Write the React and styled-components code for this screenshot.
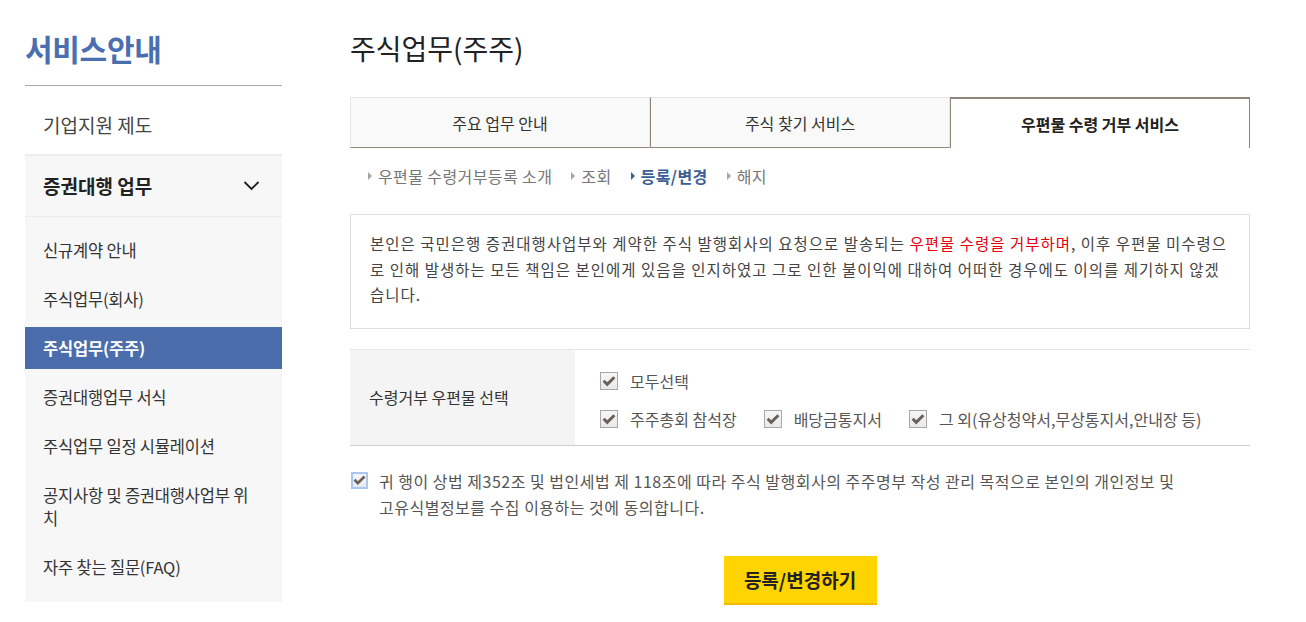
import React from 'react';
import styled, { createGlobalStyle } from 'styled-components';

const GlobalStyle = createGlobalStyle`
  * { box-sizing: border-box; }
  body {
    margin: 0;
    background: #fff;
    font-family: "Noto Sans CJK KR", "Noto Sans", sans-serif;
    color: #333;
  }
`;

const Page = styled.div`
  display: flex;
  gap: 68px;
  padding-left: 25px;
  width: 1306px;
`;

const Sidebar = styled.aside`
  width: 257px;
  flex-shrink: 0;
`;

const SideTitle = styled.h2`
  margin: 0;
  height: 86px;
  padding-top: 29px;
  font-size: 30px;
  line-height: 38px;
  font-weight: 700;
  color: #4a6fae;
  letter-spacing: -0.3px;
  border-bottom: 1px solid #aaa;
`;

const TopItem = styled.div`
  height: 68px;
  padding: 27px 18px 0;
  font-size: 19px;
  line-height: 24px;
  color: #444;
`;

const Group = styled.div`
  background: #f7f7f7;
  border-top: 2px solid #ededed;
`;

const GroupHead = styled.div`
  display: flex;
  align-items: center;
  justify-content: space-between;
  height: 61px;
  padding: 0 22px 2px 18px;
  font-size: 19px;
  font-weight: 700;
  color: #222;
  border-bottom: 1px solid #ececec;
`;

const SubList = styled.ul`
  list-style: none;
  margin: 0;
  padding: 12px 0 14px;
  display: flex;
  flex-direction: column;
  gap: 7px;
`;

const SubItem = styled.li`
  padding: 9.5px 25px 9.5px 18px;
  min-height: 42px;
  font-size: 16.5px;
  line-height: 23px;
  letter-spacing: -0.2px;
  color: ${p => (p.$active ? '#fff' : '#333')};
  background: ${p => (p.$active ? '#4b6dab' : 'transparent')};
  font-weight: ${p => (p.$active ? 700 : 400)};
`;

const Main = styled.main`
  width: 900px;
  flex-shrink: 0;
  padding-top: 30px;
`;

const PageTitle = styled.h1`
  margin: 0 0 31px;
  font-size: 28px;
  line-height: 36px;
  font-weight: 400;
  color: #222;
`;

const Tabs = styled.div`
  display: flex;
  height: 51px;
`;

const Tab = styled.div`
  flex: 1;
  display: flex;
  align-items: center;
  justify-content: center;
  padding-top: ${p => (p.$active ? '1px' : '0')};
  font-size: 16px;
  color: ${p => (p.$active ? '#222' : '#333')};
  font-weight: ${p => (p.$active ? 700 : 400)};
  background: ${p => (p.$active ? '#fff' : '#f9f9f9')};
  border: 1px solid ${p => (p.$active ? '#8e857b' : '#e6e6e6')};
  border-top-width: ${p => (p.$active ? '2px' : '1px')};
  border-bottom: ${p => (p.$active ? 'none' : '1px solid #8e857b')};
  & + & { border-left: ${p => (p.$active ? '1px solid #8e857b' : 'none')}; }
`;

const Crumbs = styled.nav`
  display: flex;
  gap: 19px;
  margin-top: 16px;
  padding-left: 18px;
  line-height: 24px;
`;

const Crumb = styled.span`
  display: flex;
  align-items: center;
  gap: 6px;
  font-size: 16px;
  letter-spacing: 0.4px;
  color: ${p => (p.$active ? '#3d5f96' : '#777')};
  font-weight: ${p => (p.$active ? 700 : 400)};
  &::before {
    content: '';
    border-left: 4px solid ${p => (p.$active ? '#3d5f96' : '#a5a5a5')};
    border-top: 4px solid transparent;
    border-bottom: 4px solid transparent;
  }
`;

const Notice = styled.div`
  margin-top: 26px;
  border: 1px solid #ddd;
  padding: 16px 21px 20px 19px;
  font-size: 15.5px;
  line-height: 25.5px;
  letter-spacing: 1px;
  color: #444;
`;

const Red = styled.span`
  color: #e60012;
`;

const Table = styled.div`
  display: flex;
  margin-top: 20px;
  border-top: 1px solid #e6e6e6;
  border-bottom: 1px solid #cfcfcf;
`;

const HeadCell = styled.div`
  width: 225px;
  display: flex;
  align-items: center;
  padding-left: 19px;
  background: #f4f4f4;
  font-size: 16px;
  color: #333;
`;

const BodyCell = styled.div`
  flex: 1;
  padding: 19px 0 14px 25px;
  display: flex;
  flex-direction: column;
  gap: 14px;
`;

const CheckRow = styled.div`
  display: flex;
  gap: 27px;
  height: 24px;
`;

const CheckLabel = styled.label`
  display: flex;
  align-items: center;
  gap: 12px;
  font-size: 16px;
  color: #555;
`;

const Box = styled.span`
  width: ${p => (p.$focus ? '17px' : '18px')};
  height: ${p => (p.$focus ? '17px' : '18px')};
  flex-shrink: 0;
  display: flex;
  align-items: center;
  justify-content: center;
  background: linear-gradient(#f6f6f6, #e9e9e9);
  border: ${p => (p.$focus ? '2px solid #a9c6f2' : '1px solid #a8a8a8')};
  margin-top: ${p => (p.$focus ? '4px' : '0')};
`;

const Agree = styled.div`
  display: flex;
  align-items: flex-start;
  gap: 11px;
  margin-top: 22px;
  padding-left: 1px;
`;

const AgreeText = styled.p`
  margin: 0;
  font-size: 16px;
  line-height: 26px;
  letter-spacing: 0.5px;
  color: #555;
  word-break: keep-all;
`;

const ButtonRow = styled.div`
  display: flex;
  justify-content: center;
  margin-top: 36px;
`;

const SubmitButton = styled.button`
  width: 153px;
  height: 49px;
  border: none;
  border-bottom: 2px solid #f1b900;
  background: #ffd400;
  font-family: inherit;
  font-size: 19px;
  font-weight: 700;
  color: #222;
  cursor: pointer;
`;

const Check = () => (
  <svg width="14" height="12" viewBox="0 0 14 12">
    <path d="M1.6 5.8 L5.2 9.4 L12.4 2.2" fill="none" stroke="#6b605a" strokeWidth="2.9" />
  </svg>
);

const CheckBox = ({ focus }) => (
  <Box $focus={focus}>
    <Check />
  </Box>
);

const Chevron = () => (
  <svg width="17" height="11" viewBox="0 0 17 11">
    <path d="M1.5 2 L8.5 9 L15.5 2" fill="none" stroke="#222" strokeWidth="1.8" />
  </svg>
);

const subMenu = [
  '신규계약 안내',
  '주식업무(회사)',
  '주식업무(주주)',
  '증권대행업무 서식',
  '주식업무 일정 시뮬레이션',
  '공지사항 및 증권대행사업부 위치',
  '자주 찾는 질문(FAQ)',
];

const tabs = ['주요 업무 안내', '주식 찾기 서비스', '우편물 수령 거부 서비스'];
const crumbs = ['우편물 수령거부등록 소개', '조회', '등록/변경', '해지'];

export default function App() {
  return (
    <>
      <GlobalStyle />
      <Page>
        <Sidebar>
          <SideTitle>서비스안내</SideTitle>
          <TopItem>기업지원 제도</TopItem>
          <Group>
            <GroupHead>
              증권대행 업무
              <Chevron />
            </GroupHead>
            <SubList>
              {subMenu.map(item => (
                <SubItem key={item} $active={item === '주식업무(주주)'}>
                  {item}
                </SubItem>
              ))}
            </SubList>
          </Group>
        </Sidebar>

        <Main>
          <PageTitle>주식업무(주주)</PageTitle>
          <Tabs>
            {tabs.map((t, i) => (
              <Tab key={t} $active={i === 2}>{t}</Tab>
            ))}
          </Tabs>
          <Crumbs>
            {crumbs.map(c => (
              <Crumb key={c} $active={c === '등록/변경'}>{c}</Crumb>
            ))}
          </Crumbs>

          <Notice>
            본인은 국민은행 증권대행사업부와 계약한 주식 발행회사의 요청으로 발송되는{' '}
            <Red>우편물 수령을 거부하며</Red>, 이후 우편물 미수령으로 인해 발생하는 모든 책임은
            본인에게 있음을 인지하였고 그로 인한 불이익에 대하여 어떠한 경우에도 이의를 제기하지
            않겠습니다.
          </Notice>

          <Table>
            <HeadCell>수령거부 우편물 선택</HeadCell>
            <BodyCell>
              <CheckRow>
                <CheckLabel><CheckBox />모두선택</CheckLabel>
              </CheckRow>
              <CheckRow>
                <CheckLabel><CheckBox />주주총회 참석장</CheckLabel>
                <CheckLabel><CheckBox />배당금통지서</CheckLabel>
                <CheckLabel><CheckBox />그 외(유상청약서,무상통지서,안내장 등)</CheckLabel>
              </CheckRow>
            </BodyCell>
          </Table>

          <Agree>
            <CheckBox focus />
            <AgreeText>
              귀 행이 상법 제352조 및 법인세법 제 118조에 따라 주식 발행회사의 주주명부 작성 관리
              목적으로 본인의 개인정보 및 고유식별정보를 수집 이용하는 것에 동의합니다.
            </AgreeText>
          </Agree>

          <ButtonRow>
            <SubmitButton>등록/변경하기</SubmitButton>
          </ButtonRow>
        </Main>
      </Page>
    </>
  );
}
